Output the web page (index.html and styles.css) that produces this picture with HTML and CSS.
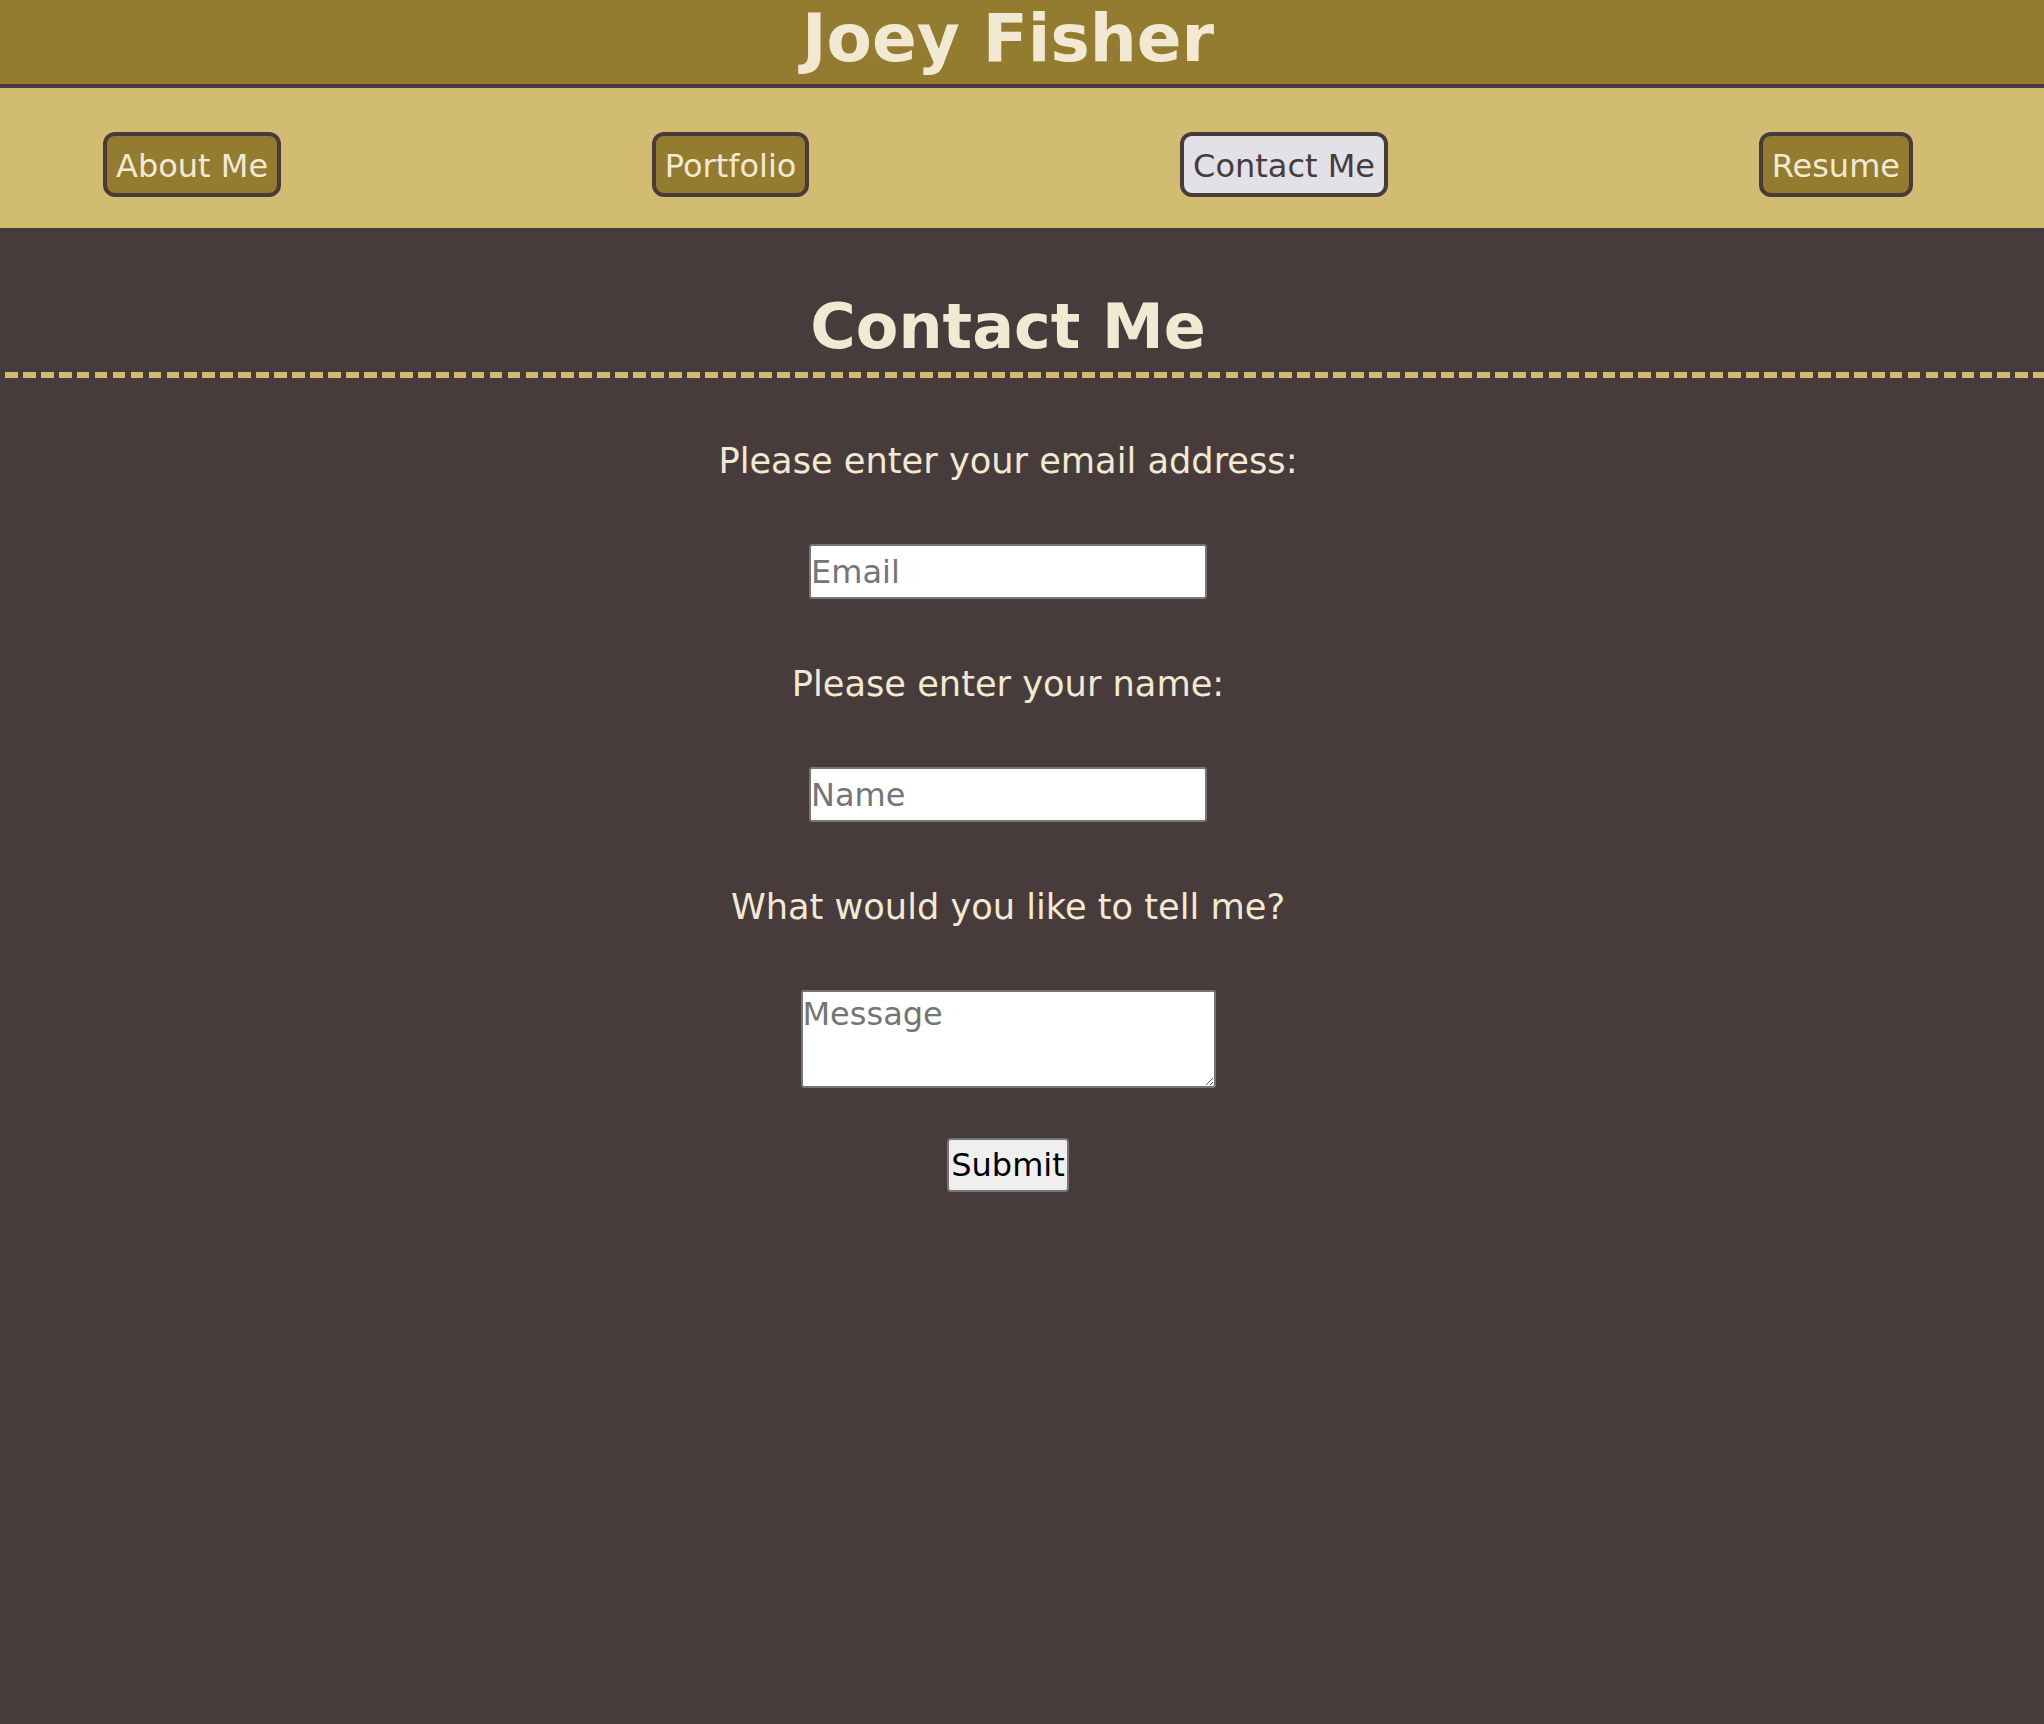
FILE: index.html
```html
<!DOCTYPE html>
<html lang="en">
<head>
<meta charset="utf-8">
<title>Joey Fisher - Contact Me</title>
<link rel="stylesheet" href="styles.css">
</head>
<body>
<header class="site-header">
  <h1 class="site-title">Joey Fisher</h1>
</header>
<nav class="site-nav">
  <a class="nav-btn" href="#">About Me</a>
  <a class="nav-btn" href="#">Portfolio</a>
  <a class="nav-btn nav-btn-active" href="#">Contact Me</a>
  <a class="nav-btn" href="#">Resume</a>
</nav>
<main class="content">
  <h2 class="page-title">Contact Me</h2>
  <form class="contact-form">
    <label class="field-label" for="email">Please enter your email address:</label>
    <input class="field-input" type="email" id="email" placeholder="Email">
    <label class="field-label" for="name">Please enter your name:</label>
    <input class="field-input" type="text" id="name" placeholder="Name">
    <label class="field-label" for="message">What would you like to tell me?</label>
    <textarea class="field-message" id="message" placeholder="Message"></textarea>
    <button class="submit-btn" type="submit">Submit</button>
  </form>
</main>
</body>
</html>
```
FILE: styles.css
```css
html, body {
  margin: 0;
  padding: 0;
}

body {
  background: #473c3b;
  min-height: 100vh;
  font-family: Verdana, "DejaVu Sans", sans-serif;
  color: #f2e9d3;
}

.site-header {
  background: #937b30;
  height: 88px;
  box-sizing: border-box;
  border-bottom: 4px solid #473c3b;
  padding-right: 28px;
}

.site-title {
  margin: 0;
  font-size: 66px;
  line-height: 77px;
  font-weight: bold;
  text-align: center;
  color: #f2e9d3;
}

.site-nav {
  background: #d1bc72;
  height: 140px;
  box-sizing: border-box;
  padding: 44px 131px 0 103px;
  display: flex;
  justify-content: space-between;
  align-items: flex-start;
}

.nav-btn {
  display: block;
  font-size: 32px;
  line-height: 37px;
  padding: 12px 9px 8px;
  border: 4px solid #473c3b;
  border-radius: 12px;
  background: #937b30;
  color: #f2e9d3;
  text-decoration: none;
}

.nav-btn-active {
  background: #e3e1e8;
  color: #473c3b;
}

.content {
  display: block;
}

.page-title {
  margin: 63px 0 0;
  padding: 0 28px 15px 0;
  font-size: 62px;
  line-height: 72px;
  font-weight: bold;
  text-align: center;
  color: #f2e9d3;
  background-image: repeating-linear-gradient(90deg, #d1bc72 0 12.7px, transparent 12.7px 17.95px);
  background-size: 100% 6px;
  background-repeat: no-repeat;
  background-position: 5.3px 100%;
}

.contact-form {
  display: flex;
  flex-direction: column;
  align-items: center;
  padding: 62px 28px 0 0;
}

.field-label {
  font-size: 35.2px;
  line-height: 42px;
  color: #f2e9d3;
  margin-bottom: 62px;
}

.field-input {
  font-family: Verdana, "DejaVu Sans", sans-serif;
  font-size: 32px;
  width: 398px;
  height: 55px;
  box-sizing: border-box;
  padding: 0;
  border: 2px solid #767676;
  border-radius: 3px;
  background: #ffffff;
  color: #000000;
  margin: 0 0 64px;
}

.field-message {
  font-family: Verdana, "DejaVu Sans", sans-serif;
  font-size: 32px;
  width: 415px;
  height: 98px;
  box-sizing: border-box;
  padding: 3px 0 0 0;
  border: 2px solid #767676;
  border-radius: 3px;
  background: #ffffff;
  color: #000000;
  margin: 0 0 50px;
}

.field-input::placeholder,
.field-message::placeholder {
  color: #757575;
}

.submit-btn {
  font-family: Verdana, "DejaVu Sans", sans-serif;
  font-size: 32px;
  height: 54px;
  box-sizing: border-box;
  padding: 0 2px;
  border: 2px solid #767676;
  border-radius: 4px;
  background: #efefef;
  color: #000000;
}
```
